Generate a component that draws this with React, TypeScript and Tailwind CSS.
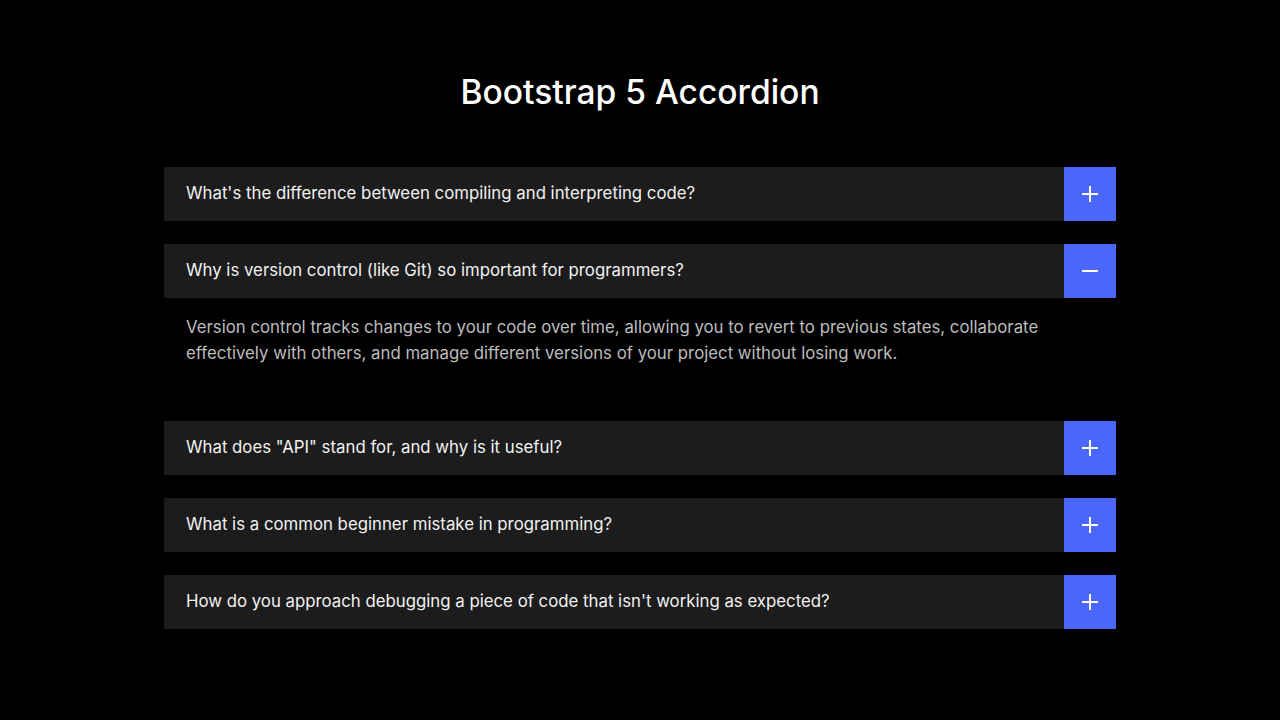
import { useState } from "react";

const items = [
  {
    q: "What's the difference between compiling and interpreting code?",
    a: "Compiling translates your whole program into machine code before it runs, while interpreting executes the code line by line as the program runs.",
  },
  {
    q: "Why is version control (like Git) so important for programmers?",
    a: "Version control tracks changes to your code over time, allowing you to revert to previous states, collaborate effectively with others, and manage different versions of your project without losing work.",
  },
  {
    q: 'What does "API" stand for, and why is it useful?',
    a: "API stands for Application Programming Interface. It lets different pieces of software talk to each other through a defined set of rules.",
  },
  {
    q: "What is a common beginner mistake in programming?",
    a: "Trying to write everything at once instead of testing small pieces of code as you go.",
  },
  {
    q: "How do you approach debugging a piece of code that isn't working as expected?",
    a: "Reproduce the problem, narrow down where it happens, inspect values along the way and change one thing at a time.",
  },
];

function Icon({ open }: { open: boolean }) {
  return (
    <svg width="18" height="18" viewBox="0 0 18 18" fill="none">
      <line x1="1" y1="9" x2="17" y2="9" stroke="white" strokeWidth="2" />
      {!open && <line x1="9" y1="1" x2="9" y2="17" stroke="white" strokeWidth="2" />}
    </svg>
  );
}

export default function App() {
  const [open, setOpen] = useState(1);

  return (
    <div
      className="min-h-screen w-full bg-black text-white"
      style={{ fontFamily: "Inter, 'Liberation Sans', sans-serif" }}
    >
      <div className="mx-auto w-[952px] pt-[70px]">
        <h1 className="text-center text-[33.6px] font-medium leading-[44px] text-white">
          Bootstrap 5 Accordion
        </h1>

        <div className="mt-[53px] flex flex-col gap-[23px]">
          {items.map((item, i) => (
            <div key={i}>
              <button
                onClick={() => setOpen(open === i ? -1 : i)}
                className="flex h-[54px] w-full items-stretch bg-[#1c1c1c] text-left"
              >
                <span className="flex flex-1 items-center pl-[22px] text-[16.8px] text-[#f2f2f2]">
                  {item.q}
                </span>
                <span className="flex w-[52px] items-center justify-center bg-[#4a67fa]">
                  <Icon open={open === i} />
                </span>
              </button>
              {open === i && (
                <p className="pb-[32px] pl-[22px] pr-[60px] pt-[16px] text-[16.8px] leading-[26px] text-[#bcbcbc]">
                  {item.a}
                </p>
              )}
            </div>
          ))}
        </div>
      </div>
    </div>
  );
}
